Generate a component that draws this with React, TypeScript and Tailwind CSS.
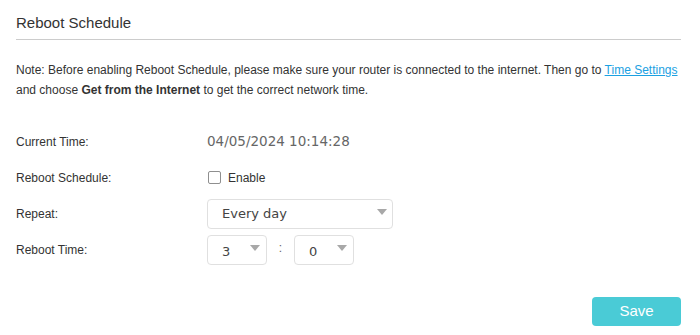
import React from "react";

const Arrow = () => (
  <svg width="10" height="6" viewBox="0 0 10 6" className="shrink-0">
    <polygon points="0,0 10,0 5,6" fill="#a8a8a8" />
  </svg>
);

export default function App() {
  return (
    <div className="w-[700px] h-[335px] bg-white pl-4 pr-[19px] pt-[14px]" style={{ fontFamily: '"Liberation Sans", Arial, sans-serif' }}>
      <div className="text-[15px] leading-[18px] text-[#333] pb-[7px] border-b border-[#cccccc]">Reboot Schedule</div>
      <div className="mt-5 text-[12px] leading-[20px] text-[#333]">
        Note: Before enabling Reboot Schedule, please make sure your router is connected to the internet. Then go to{" "}
        <span className="text-[#1ba1e2] underline">Time Settings</span>
        <br />
        and choose <span className="font-bold">Get from the Internet</span> to get the correct network time.
      </div>
      <div className="mt-[27px] flex flex-col gap-[7px] text-[12px] text-[#333]">
        <div className="flex h-[29px] items-center">
          <div className="w-[191px]">Current Time:</div>
          <div className="text-[13.5px] text-[#666]" style={{ fontFamily: '"DejaVu Sans", Verdana, sans-serif' }}>04/05/2024 10:14:28</div>
        </div>
        <div className="flex h-[29px] items-center">
          <div className="w-[192px]">Reboot Schedule:</div>
          <div className="w-[13px] h-[13px] border border-[#8f8f8f] rounded-[2px] bg-white"></div>
          <div className="ml-[7px]">Enable</div>
        </div>
        <div className="flex h-[29px] items-center">
          <div className="w-[191px]">Repeat:</div>
          <div className="w-[186px] h-[30px] border border-[#e0e0e0] rounded-[4px] flex items-center justify-between pl-[14px] pr-[5px]">
            <span className="text-[13px] text-[#444] leading-none" style={{ fontFamily: '"DejaVu Sans", Verdana, sans-serif' }}>Every day</span>
            <span className="-mt-[4px]"><Arrow /></span>
          </div>
        </div>
        <div className="flex h-[29px] items-center">
          <div className="w-[191px]">Reboot Time:</div>
          <div className="w-[60px] h-[30px] border border-[#e0e0e0] rounded-[4px] flex items-center justify-between pl-[14px] pr-[6px]">
            <span className="text-[13px] text-[#444] leading-none mt-[3px]" style={{ fontFamily: '"DejaVu Sans", Verdana, sans-serif' }}>3</span>
            <span className="-mt-[4px]"><Arrow /></span>
          </div>
          <div className="w-[27px] text-center text-[#666] -mt-[3px]">:</div>
          <div className="w-[60px] h-[30px] border border-[#e0e0e0] rounded-[4px] flex items-center justify-between pl-[14px] pr-[6px]">
            <span className="text-[13px] text-[#444] leading-none mt-[3px]" style={{ fontFamily: '"DejaVu Sans", Verdana, sans-serif' }}>0</span>
            <span className="-mt-[4px]"><Arrow /></span>
          </div>
        </div>
      </div>
      <div className="mt-[33px] flex justify-end">
        <button className="w-[89px] h-[29px] rounded-[4px] bg-[#4acbd6] text-white text-[15px]">Save</button>
      </div>
    </div>
  );
}
